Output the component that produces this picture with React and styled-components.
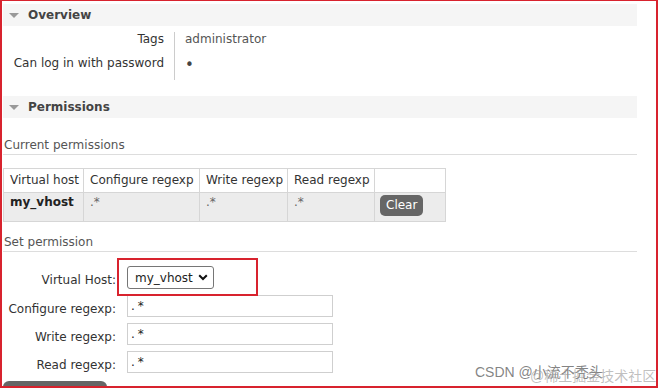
import React from 'react';
import styled, { createGlobalStyle } from 'styled-components';

const GlobalStyle = createGlobalStyle`
  body {
    margin: 0;
    background: #fff;
    font-family: "DejaVu Sans", Verdana, sans-serif;
    font-size: 12px;
    color: #484848;
  }
`;

const Frame = styled.div`
  position: relative;
  box-sizing: border-box;
  width: 658px;
  height: 388px;
  overflow: hidden;
  border: 2px solid #d8232e;
  border-top-width: 1px;
  padding: 3px 19px 0 1px;
`;

const SectionHeader = styled.h2`
  display: flex;
  align-items: center;
  gap: 9px;
  height: 22px;
  margin: ${({ $top }) => $top || 0}px 0 0;
  padding-left: 6px;
  background: #f5f5f5;
  font-size: 12px;
  line-height: 14px;
  font-weight: bold;
  color: #444;
`;

const Arrow = styled.span`
  width: 0;
  height: 0;
  border-left: 5px solid transparent;
  border-right: 5px solid transparent;
  border-top: 5px solid #999;
`;

const Props = styled.div`
  display: grid;
  grid-template-columns: 171px max-content;
  margin-top: 6px;
  line-height: 14px;
`;

const PropLabel = styled.div`
  text-align: right;
  padding: 0 10px 10px 0;
  color: #333;
`;

const PropValue = styled.div`
  height: 14px;
  border-left: 1px solid #ccc;
  padding: 0 0 10px 10px;
  color: #555;
`;

const Bullet = styled.span`
  font-size: 15px;
  line-height: 0;
  vertical-align: -3px;
  color: #444;
`;

const SubHeading = styled.h3`
  margin: ${({ $top }) => $top}px 0 0;
  padding: 0 0 2px 1px;
  border-bottom: 1px solid #ddd;
  font-size: 12px;
  line-height: 14px;
  font-weight: normal;
  color: #555;
`;

const Table = styled.table`
  margin-top: 13px;
  width: 442px;
  table-layout: fixed;
  border-collapse: collapse;
  line-height: 14px;
  color: #333;
`;

const Th = styled.th`
  box-sizing: border-box;
  width: ${({ $w }) => $w}px;
  padding: 4px 6px 5px;
  border: 1px solid #d6d6d6;
  font-weight: normal;
  text-align: left;
  white-space: nowrap;
  overflow: hidden;
`;

const DataRow = styled.tr`
  background: #ececec;
`;

const Td = styled.td`
  padding: 2px 6px 5px;
  border: 1px solid #d6d6d6;
  vertical-align: top;
  font-weight: ${({ $bold }) => ($bold ? 'bold' : 'normal')};
  color: ${({ $bold }) => ($bold ? '#222' : '#666')};
`;

const SmallButton = styled.button`
  display: block;
  height: 21px;
  padding: 0 6px;
  margin-left: -1px;
  border: none;
  border-radius: 5px;
  background: #666;
  color: #fff;
  font-family: inherit;
  font-size: 12px;
  line-height: 21px;
`;

const Form = styled.div`
  display: grid;
  grid-template-columns: 113px 206px;
  column-gap: 11px;
  row-gap: 6px;
  margin-top: 14px;
  line-height: 14px;
`;

const FormLabel = styled.label`
  align-self: center;
  padding-top: 5px;
  text-align: right;
  color: #333;
  white-space: nowrap;
`;

const SelectWrap = styled.div`
  position: relative;
`;

const SelectBox = styled.div`
  box-sizing: border-box;
  display: flex;
  align-items: center;
  justify-content: space-between;
  width: 87px;
  height: 23px;
  padding: 0 5px 0 7px;
  border: 1px solid #767676;
  border-radius: 3px;
  color: #222;
`;

const Highlight = styled.div`
  position: absolute;
  left: -10px;
  top: -8px;
  width: 141px;
  height: 38px;
  box-sizing: border-box;
  border: 2px solid #d8232e;
`;

const TextInput = styled.div`
  box-sizing: border-box;
  height: 22px;
  padding: 3px 3px 0;
  border: 1px solid #cfcfcf;
  letter-spacing: 3px;
  color: #222;
`;

const BigButton = styled.button`
  display: block;
  width: 104px;
  height: 26px;
  margin: 8px 0 0 0;
  border: none;
  border-radius: 6px;
  background: #666;
`;

const Watermark = styled.span`
  position: absolute;
  left: ${({ $x }) => $x}px;
  top: ${({ $y }) => $y}px;
  font-family: "Liberation Sans", "Noto Sans CJK SC", sans-serif;
  font-size: 14px;
  white-space: nowrap;
  color: ${({ $c }) => $c};
`;

const Chevron = () => (
  <svg width="10" height="7" viewBox="0 0 10 7">
    <path d="M1.2 1.2 L5 5 L8.8 1.2" fill="none" stroke="#111" strokeWidth="2" />
  </svg>
);

const columns = [
  ['Virtual host', 80],
  ['Configure regexp', 116],
  ['Write regexp', 88],
  ['Read regexp', 87],
  ['', 71],
];

const regexps = [
  ['Configure regexp:', '.*'],
  ['Write regexp:', '.*'],
  ['Read regexp:', '.*'],
];

export default function App() {
  return (
    <Frame>
      <GlobalStyle />
      <SectionHeader>
        <Arrow />
        Overview
      </SectionHeader>
      <Props>
        <PropLabel>Tags</PropLabel>
        <PropValue>administrator</PropValue>
        <PropLabel>Can log in with password</PropLabel>
        <PropValue>
          <Bullet>•</Bullet>
        </PropValue>
      </Props>

      <SectionHeader $top={16}>
        <Arrow />
        Permissions
      </SectionHeader>
      <SubHeading $top={20}>Current permissions</SubHeading>
      <Table>
        <thead>
          <tr>
            {columns.map(([name, w]) => (
              <Th key={w + name} $w={w}>{name}</Th>
            ))}
          </tr>
        </thead>
        <tbody>
          <DataRow>
            <Td $bold>my_vhost</Td>
            <Td>.*</Td>
            <Td>.*</Td>
            <Td>.*</Td>
            <Td>
              <SmallButton>Clear</SmallButton>
            </Td>
          </DataRow>
        </tbody>
      </Table>

      <SubHeading $top={13}>Set permission</SubHeading>
      <Form>
        <FormLabel>Virtual Host:</FormLabel>
        <SelectWrap>
          <SelectBox>
            my_vhost
            <Chevron />
          </SelectBox>
          <Highlight />
        </SelectWrap>
        {regexps.map(([label, value]) => (
          <React.Fragment key={label}>
            <FormLabel>{label}</FormLabel>
            <TextInput>{value}</TextInput>
          </React.Fragment>
        ))}
      </Form>
      <BigButton aria-label="Set permission" />

      <Watermark $x={473} $y={360} $c="rgba(110,110,110,0.85)">CSDN @小流不秃头</Watermark>
      <Watermark $x={528} $y={364} $c="rgba(150,150,150,0.6)">@稀土掘金技术社区</Watermark>
    </Frame>
  );
}
